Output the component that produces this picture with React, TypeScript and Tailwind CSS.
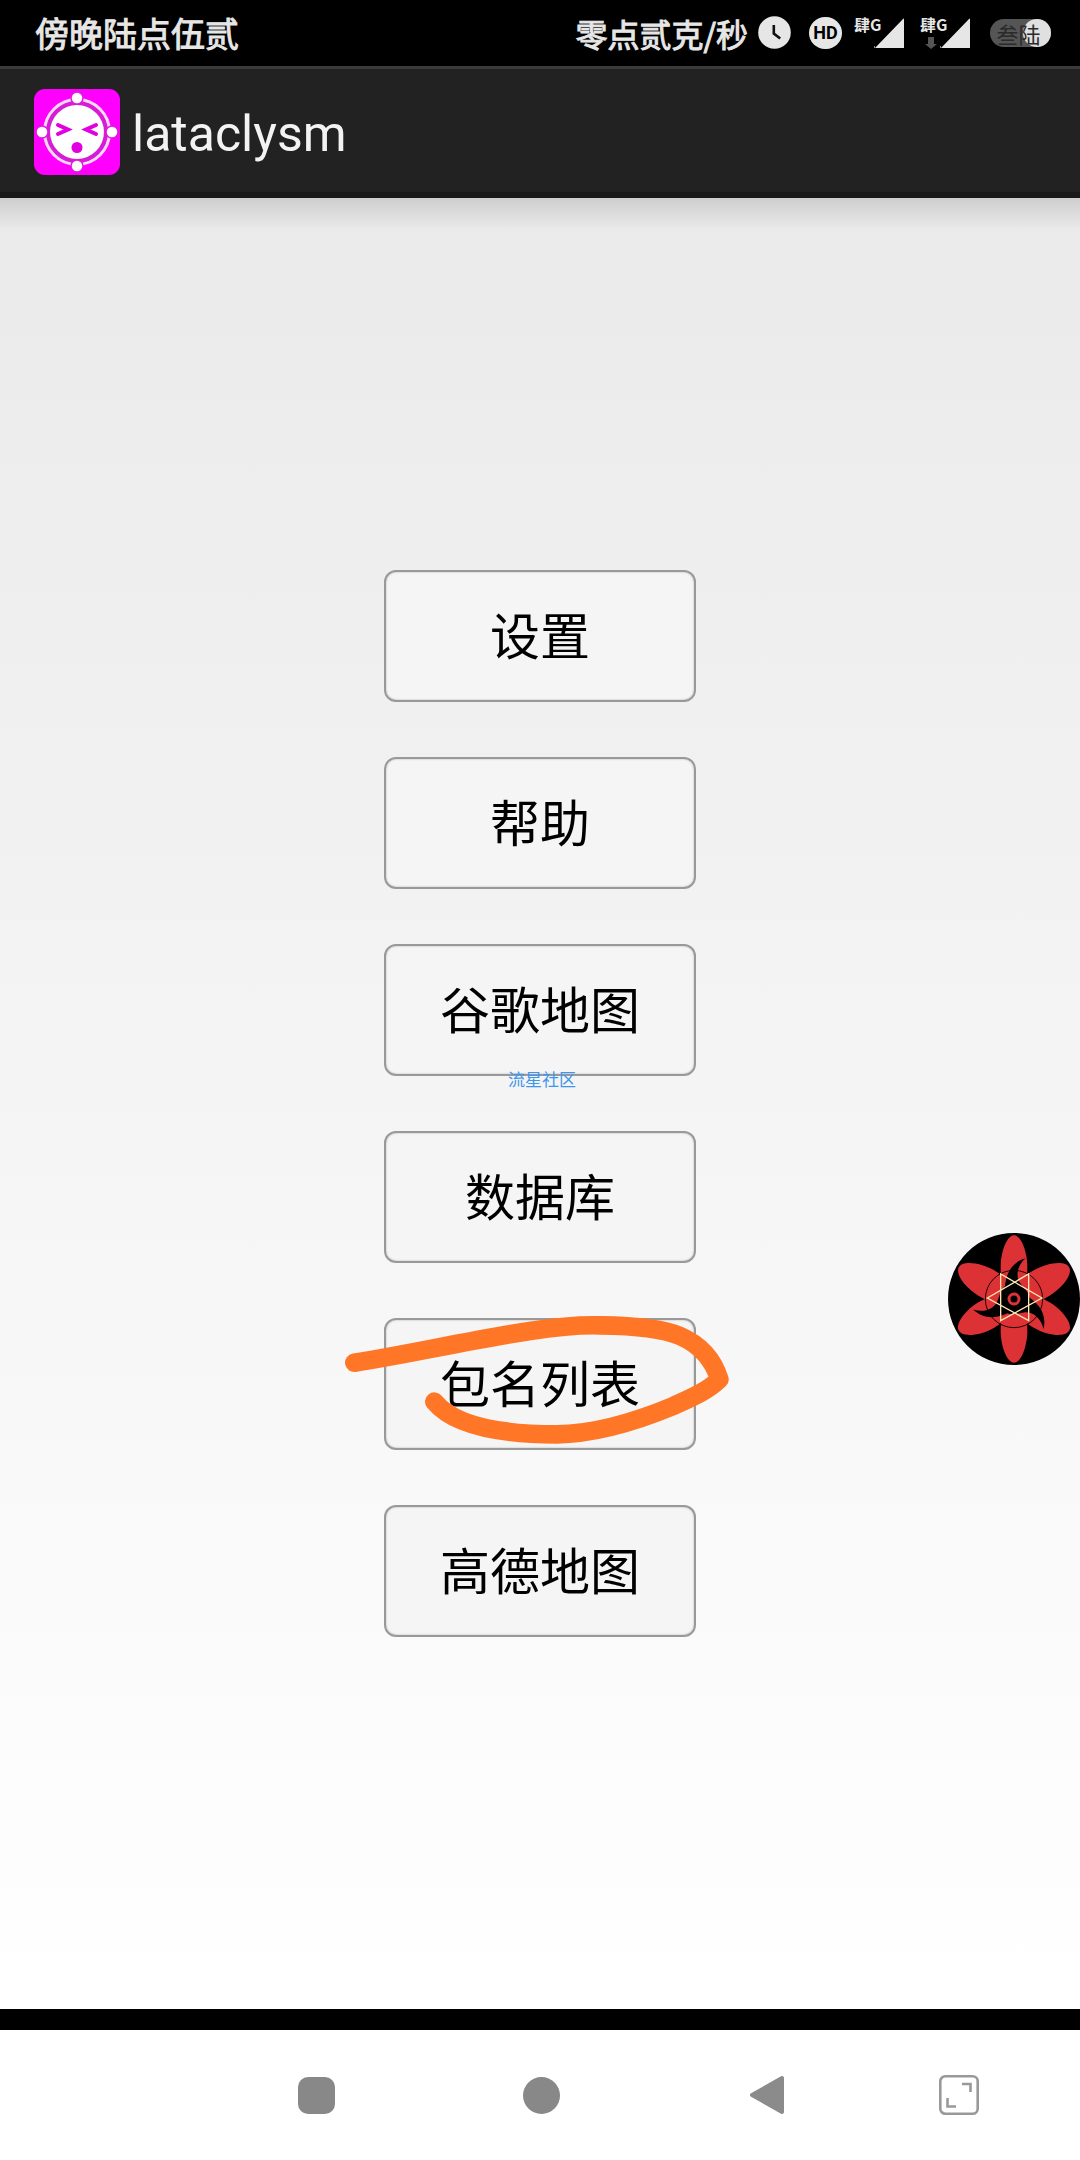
import React from 'react';

interface MenuItem {
    label: string;
    note?: string;
    circled?: boolean;
}

const menuItems: MenuItem[] = [
    { label: '设置' },
    { label: '帮助' },
    { label: '谷歌地图', note: '流星社区' },
    { label: '数据库' },
    { label: '包名列表', circled: true },
    { label: '高德地图' }
];

const SignalIcon: React.FC<{ download?: boolean }> = ({ download }) => (
    <div className="relative h-8 w-[50px]">
        <span className="absolute left-0 top-0 text-[16px] leading-[14px] font-bold whitespace-nowrap">肆G</span>
        <svg viewBox="0 0 50 32" className="h-8 w-[50px]">
            <path d="M21 31 49 2q1-1 1 0V31H21q-2-1 0-2z" fill="#e6e6e6" />
            {download && <path d="M8 20h6v7h3l-6 5-6-5h3z" fill="#555" />}
        </svg>
    </div>
);

const StatusBar: React.FC = () => (
    <div className="flex h-[66px] items-center justify-between bg-black pl-[35px] pr-[29px] pb-px text-[#e6e6e6]">
        <span className="text-[34px] leading-[40px] [-webkit-text-stroke:1px]">傍晚陆点伍贰</span>
        <div className="flex items-center">
            <span className="mr-2.5 text-[32px] leading-[40px] [-webkit-text-stroke:1px]">零点贰克/秒</span>
            <svg viewBox="0 0 33 33" className="mr-[18px] h-[33px] w-[33px]">
                <circle cx="16.5" cy="16.5" r="16.3" fill="#e6e6e6" />
                <path d="M15.8 9v8.5l6.4 5" fill="none" stroke="#111" strokeWidth="2.6" />
            </svg>
            <span className="mr-3 flex h-8 w-[33px] items-center justify-center rounded-full bg-[#e6e6e6] font-['Roboto',sans-serif] text-[18px] font-bold text-black">
                HD
            </span>
            <div className="mr-4">
                <SignalIcon />
            </div>
            <div className="mr-5">
                <SignalIcon download />
            </div>
            <div className="relative flex h-7 w-[61px] items-center justify-center rounded-full bg-[#555]">
                <div className="absolute right-0 top-0 h-7 w-7 rounded-full bg-[#e0e0e0]" />
                <span className="relative pr-1 text-[22px] leading-8 text-[#2b2b2b]">叁陆</span>
            </div>
        </div>
    </div>
);

const AppLogo: React.FC = () => (
    <svg viewBox="0 0 86 86" className="h-[86px] w-[86px]">
        <rect width="86" height="86" rx="11" fill="#ff00ff" />
        <circle cx="43" cy="43" r="29" fill="none" stroke="#d11fd1" strokeWidth="4" />
        <circle cx="43" cy="43" r="32.5" fill="none" stroke="#ffd9ff" strokeWidth="3" />
        <circle cx="43" cy="43" r="27" fill="#fff" />
        {[[43, 9], [43, 77], [8, 43], [78, 43]].map(([cx, cy]) => (
            <circle key={`${cx}-${cy}`} cx={cx} cy={cy} r="6" fill="#fff" stroke="#e01ae0" strokeWidth="1.5" />
        ))}
        <path
            d="M24 36l10 4.500-10 4.500M62 36l-10 4.500 10 4.500"
            fill="none"
            stroke="#e000e0"
            strokeWidth="4"
            strokeLinecap="round"
        />
        <circle cx="43" cy="58.500" r="5.500" fill="#e000e0" />
    </svg>
);

const Header: React.FC = () => (
    <header className="flex h-[132px] items-center gap-3 border-t-3 border-b-6 border-t-[#3a3a3a] border-b-[#1a1a1a] bg-[#222] pt-0.5 pl-[34px]">
        <AppLogo />
        <h1 className="pt-1 font-['Roboto',sans-serif] text-[50px] leading-[60px] text-[#f3f3f3]">lataclysm</h1>
    </header>
);

const Scribble: React.FC = () => (
    <svg viewBox="0 0 1230 480" className="pointer-events-none absolute -left-[54px] -top-[18px] h-[160px] w-[410px] max-w-none">
        <path
            d="M73 188C230 164 420 120 600 93C690 79 750 74 812 76C900 77 1000 86 1050 108C1110 134 1150 180 1168 238C1130 275 1080 295 1030 318C900 372 780 402 680 403C500 403 370 375 313 305"
            fill="none"
            stroke="#ff7626"
            strokeWidth="56"
            strokeLinecap="round"
            strokeLinejoin="round"
        />
    </svg>
);

const MenuButton: React.FC<{ item: MenuItem }> = ({ item }) => (
    <div className="relative">
        <button
            type="button"
            className="h-[132px] w-[312px] rounded-[12px] border-2 border-[#999] bg-[#f5f5f5] pb-1.5 text-[50px] leading-[72px] text-black shadow-[inset_0_0_2px_#aaa]"
        >
            {item.label}
        </button>
        {item.note && (
            <span className="absolute inset-x-0 -bottom-[13px] pl-1 text-center text-[17px] leading-5 text-[#3d95ee]">
                {item.note}
            </span>
        )}
        {item.circled && <Scribble />}
    </div>
);

const FloatingBall: React.FC = () => (
    <button type="button" aria-label="悬浮球" className="absolute right-0 top-[57.15%] h-[132px] w-[132px]">
        <svg viewBox="-198 -198 396 396" className="h-full w-full">
            <circle r="198" fill="#000" />
            {[0, 60, 120, 180, 240, 300].map((angle) => (
                <path
                    key={angle}
                    d="M0-191C22-191 40-140 40-96C40-50 30-24 0 0C-30-24-40-50-40-96C-40-140-22-191 0-191z"
                    fill="#dc3236"
                    transform={angle % 180 === 0 ? `rotate(${angle})` : `rotate(${angle}) scale(1.12 1)`}
                />
            ))}
            <circle r="80" fill="#dc3236" />
            <circle r="86" fill="none" stroke="#200" strokeWidth="3" />
            {[0, 120, 240].map((angle) => (
                <path
                    key={angle}
                    d="M-34 14C-24-40-34-100 34-122C8-98 4-66 20-46C32-30 46-20 48 4C30 30-10 40-34 14z"
                    fill="#000"
                    transform={`rotate(${angle})`}
                />
            ))}
            <path
                d="M-80-3L44-75V65zM84-3L-40-75V65z"
                fill="none"
                stroke="#ffe9b0"
                strokeWidth="4"
            />
            <circle r="15" fill="#000" stroke="#dc3236" strokeWidth="9" />
        </svg>
    </button>
);

const NavBar: React.FC = () => (
    <nav className="grid h-[151px] grid-cols-[204fr_225fr_225fr_225fr_160fr_41fr] items-center justify-items-center border-t-21 border-black bg-white">
        <button type="button" aria-label="最近任务" className="col-start-2 h-[37px] w-[37px] rounded-[10px] bg-[#888]" />
        <button type="button" aria-label="主页" className="h-[37px] w-[37px] rounded-full bg-[#888]" />
        <button type="button" aria-label="返回">
            <svg viewBox="0 0 36 40" className="h-10 w-9">
                <path d="M3 20L33 3V37z" fill="#8b8b8b" stroke="#8b8b8b" strokeWidth="4" strokeLinejoin="round" />
            </svg>
        </button>
        <button type="button" aria-label="全屏">
            <svg viewBox="0 0 40 40" className="h-10 w-10" fill="none" stroke="#999" strokeWidth="2.600">
                <rect x="1.300" y="1.300" width="37.400" height="37.400" rx="5" />
                <path d="M23 9h8.500v8M8.500 23v8.500h8.500" />
            </svg>
        </button>
    </nav>
);

const App: React.FC = () => {
    return (
        <div className="flex min-h-screen flex-col font-['Noto_Sans_CJK_SC',sans-serif]">
            <StatusBar />
            <Header />
            <main className="relative flex flex-1 flex-col items-center justify-center gap-[55px] bg-linear-to-b from-[#eaeaea] to-white">
                <div className="absolute inset-x-0 top-0 h-8 bg-linear-to-b from-black/12 to-transparent" />
                {menuItems.map((item) => (
                    <MenuButton key={item.label} item={item} />
                ))}
                <FloatingBall />
            </main>
            <NavBar />
        </div>
    );
};

export default App;
